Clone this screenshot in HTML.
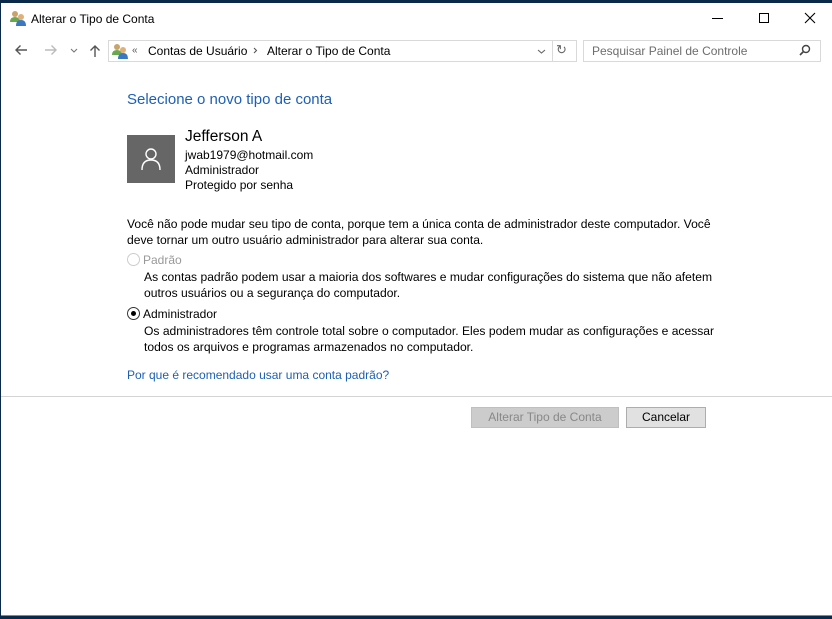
<!DOCTYPE html>
<html><head><meta charset="utf-8"><style>
*{margin:0;padding:0;box-sizing:border-box}
body{width:832px;height:619px;overflow:hidden;background:#0b2a4a;font-family:"Liberation Sans",sans-serif;font-size:12px;color:#000;position:relative}
.win{position:absolute;left:1px;top:3px;width:831px;height:613px;background:#fff;border-bottom:1px solid #888}
.a{position:absolute;white-space:nowrap}
.t{font-size:12px}
.p{font-size:12.1px;line-height:16px}
.gray{color:#999}
</style></head><body>
<div class="win"></div>
<svg class="a" style="left:9px;top:10px" width="18" height="16" viewBox="0 0 18 16"><circle cx="6" cy="4" r="3" fill="#c9a46a"/><path d="M1 12 Q1 7 6 7 Q11 7 11 12Z" fill="#6aa84f"/><circle cx="12" cy="7" r="3" fill="#e0b07a"/><path d="M7 16 Q7 10 12 10 Q17 10 17 16Z" fill="#3a78c2"/></svg>
<div class="a t" style="left:31px;top:12px">Alterar o Tipo de Conta</div>
<div class="a" style="left:712px;top:18px;width:11px;height:1px;background:#000"></div>
<div class="a" style="left:759px;top:13px;width:10px;height:10px;border:1px solid #000"></div>
<svg class="a" style="left:804px;top:12px" width="12" height="12"><path d="M1 1L11 11M11 1L1 11" stroke="#000" stroke-width="1.1"/></svg>
<svg class="a" style="left:14px;top:44px" width="14" height="12"><path d="M13 6H2M6.5 1.5L2 6l4.5 4.5" fill="none" stroke="#555" stroke-width="1.4"/></svg>
<svg class="a" style="left:44px;top:44px" width="14" height="12"><path d="M1 6H12M7.5 1.5L12 6l-4.5 4.5" fill="none" stroke="#bbb" stroke-width="1.4"/></svg>
<svg class="a" style="left:70px;top:48px" width="8" height="5"><path d="M1 1l3 3 3-3" fill="none" stroke="#777" stroke-width="1.1"/></svg>
<svg class="a" style="left:89px;top:44px" width="12" height="14"><path d="M6 13V2M1.5 6.5L6 2l4.5 4.5" fill="none" stroke="#555" stroke-width="1.4"/></svg>
<div class="a" style="left:108px;top:40px;width:469px;height:22px;border:1px solid #d9d9d9"></div>
<div class="a" style="left:552px;top:40px;width:1px;height:22px;background:#d9d9d9"></div>
<svg class="a" style="left:111px;top:43px" width="18" height="16" viewBox="0 0 18 16"><circle cx="6" cy="4" r="3" fill="#c9a46a"/><path d="M1 12 Q1 7 6 7 Q11 7 11 12Z" fill="#6aa84f"/><circle cx="12" cy="7" r="3" fill="#e0b07a"/><path d="M7 16 Q7 10 12 10 Q17 10 17 16Z" fill="#3a78c2"/></svg>
<div class="a" style="left:132px;top:45px;font-size:10px;color:#555">«</div>
<div class="a t" style="left:148px;top:44px">Contas de Usuário</div>
<svg class="a" style="left:253px;top:47px" width="5" height="7"><path d="M1 1l2.5 2.5L1 6" fill="none" stroke="#555" stroke-width="1.1"/></svg>
<div class="a t" style="left:267px;top:44px">Alterar o Tipo de Conta</div>
<svg class="a" style="left:537px;top:49px" width="9" height="5"><path d="M1 1l3.5 3 3.5-3" fill="none" stroke="#666" stroke-width="1.1"/></svg>
<div class="a" style="left:556px;top:42px;font-size:13px;color:#666">↻</div>
<div class="a" style="left:583px;top:40px;width:238px;height:22px;border:1px solid #d9d9d9"></div>
<div class="a t" style="left:592px;top:44px;color:#6d6d6d">Pesquisar Painel de Controle</div>
<svg class="a" style="left:799px;top:44px" width="12" height="12"><circle cx="7" cy="5" r="3.5" fill="none" stroke="#444" stroke-width="1.4"/><line x1="4.5" y1="7.5" x2="1" y2="11" stroke="#444" stroke-width="1.6"/></svg>
<div class="a" style="left:127px;top:91px;font-size:15px;color:#1e5fb4">Selecione o novo tipo de conta</div>
<div class="a" style="left:127px;top:135px;width:48px;height:48px;background:#666"></div>
<svg class="a" style="left:140px;top:147px" width="22" height="24" viewBox="0 0 22 24"><circle cx="11" cy="7" r="5" fill="none" stroke="#fff" stroke-width="1.4"/><path d="M2 23 Q2 13 11 13 Q20 13 20 23" fill="none" stroke="#fff" stroke-width="1.4"/></svg>
<div class="a" style="left:185px;top:128px;font-size:15.5px">Jefferson A</div>
<div class="a t" style="left:185px;top:148px">jwab1979@hotmail.com</div>
<div class="a t" style="left:185px;top:163px">Administrador</div>
<div class="a t" style="left:185px;top:178px">Protegido por senha</div>
<div class="a p" style="left:127px;top:216px">Você não pode mudar seu tipo de conta, porque tem a única conta de administrador deste computador. Você<br>deve tornar um outro usuário administrador para alterar sua conta.</div>
<div class="a" style="left:127px;top:253px;width:13px;height:13px;border:1px solid #ccc;border-radius:50%"></div>
<div class="a t gray" style="left:143px;top:253px">Padrão</div>
<div class="a p" style="left:144px;top:269px">As contas padrão podem usar a maioria dos softwares e mudar configurações do sistema que não afetem<br>outros usuários ou a segurança do computador.</div>
<div class="a" style="left:127px;top:307px;width:13px;height:13px;border:1px solid #333;border-radius:50%"></div>
<div class="a" style="left:131px;top:311px;width:5px;height:5px;background:#000;border-radius:50%"></div>
<div class="a t" style="left:143px;top:307px">Administrador</div>
<div class="a p" style="left:144px;top:323px">Os administradores têm controle total sobre o computador. Eles podem mudar as configurações e acessar<br>todos os arquivos e programas armazenados no computador.</div>
<div class="a" style="left:127px;top:368px;font-size:12px;color:#1e5fb4">Por que é recomendado usar uma conta padrão?</div>
<div class="a" style="left:1px;top:396px;width:831px;height:1px;background:#d4d4d4"></div>
<div class="a" style="left:471px;top:407px;width:148px;height:21px;background:#ccc;border:1px solid #bfbfbf;color:#888;text-align:center;line-height:19px">Alterar Tipo de Conta</div>
<div class="a" style="left:626px;top:407px;width:80px;height:21px;background:#e1e1e1;border:1px solid #adadad;text-align:center;line-height:19px">Cancelar</div>
</body></html>
